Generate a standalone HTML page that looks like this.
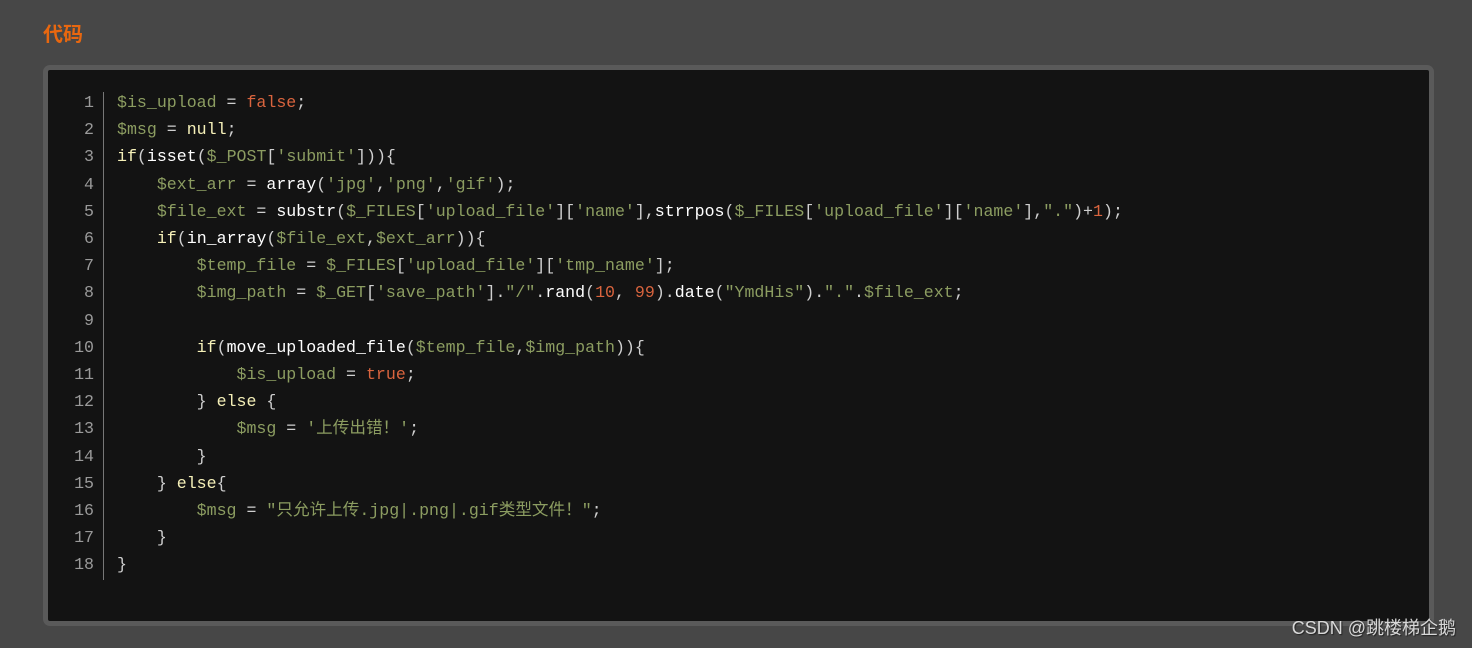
<!DOCTYPE html>
<html><head><meta charset="utf-8"><style>
body{margin:0;width:1472px;height:648px;background:#474747;overflow:hidden;position:relative;font-family:"Liberation Sans","Noto Sans CJK SC",sans-serif}
h{position:absolute;left:43px;top:18px;color:#e8670f;font-weight:bold;font-size:20px;font-family:"Liberation Sans","Noto Sans CJK SC",sans-serif}
.box{position:absolute;left:43px;top:65px;width:1381px;height:551px;background:#131313;border:5px solid #5a5a5a;border-radius:7px}
pre{margin:0;position:absolute;top:19px;font-family:"Liberation Mono","Noto Sans CJK SC",monospace;font-size:16.6px;line-height:27.2px}
.n{left:0;width:46px;text-align:right;color:#9a9a9a;}
.bar{position:absolute;left:55px;top:22px;width:1px;height:488px;background:#777}
.c{left:69px;color:#cfcfcf}
.v{color:#8c9d61}.k{color:#f5f0b8}.r{color:#d9643e}.s{color:#8c9d61}.f{color:#fff}
.wm{position:absolute;right:16px;bottom:8px;color:#d8d8d8;font-size:18px;text-shadow:1px 1px 1px #222}
</style></head><body>
<h>代码</h>
<div class="box">
<pre class="n">1
2
3
4
5
6
7
8
9
10
11
12
13
14
15
16
17
18</pre>
<div class="bar"></div>
<pre class="c"><span class="v">$is_upload</span> = <span class="r">false</span>;
<span class="v">$msg</span> = <span class="k">null</span>;
<span class="k">if</span>(<span class="f">isset</span>(<span class="v">$_POST</span>[<span class="s">'submit'</span>])){
    <span class="v">$ext_arr</span> = <span class="f">array</span>(<span class="s">'jpg'</span>,<span class="s">'png'</span>,<span class="s">'gif'</span>);
    <span class="v">$file_ext</span> = <span class="f">substr</span>(<span class="v">$_FILES</span>[<span class="s">'upload_file'</span>][<span class="s">'name'</span>],<span class="f">strrpos</span>(<span class="v">$_FILES</span>[<span class="s">'upload_file'</span>][<span class="s">'name'</span>],<span class="s">"."</span>)+<span class="r">1</span>);
    <span class="k">if</span>(<span class="f">in_array</span>(<span class="v">$file_ext</span>,<span class="v">$ext_arr</span>)){
        <span class="v">$temp_file</span> = <span class="v">$_FILES</span>[<span class="s">'upload_file'</span>][<span class="s">'tmp_name'</span>];
        <span class="v">$img_path</span> = <span class="v">$_GET</span>[<span class="s">'save_path'</span>].<span class="s">"/"</span>.<span class="f">rand</span>(<span class="r">10</span>, <span class="r">99</span>).<span class="f">date</span>(<span class="s">"YmdHis"</span>).<span class="s">"."</span>.<span class="v">$file_ext</span>;

        <span class="k">if</span>(<span class="f">move_uploaded_file</span>(<span class="v">$temp_file</span>,<span class="v">$img_path</span>)){
            <span class="v">$is_upload</span> = <span class="r">true</span>;
        } <span class="k">else</span> {
            <span class="v">$msg</span> = <span class="s">'上传出错！'</span>;
        }
    } <span class="k">else</span>{
        <span class="v">$msg</span> = <span class="s">"只允许上传.jpg|.png|.gif类型文件！"</span>;
    }
}</pre>
</div>
<div class="wm">CSDN @跳楼梯企鹅</div>
</body></html>
